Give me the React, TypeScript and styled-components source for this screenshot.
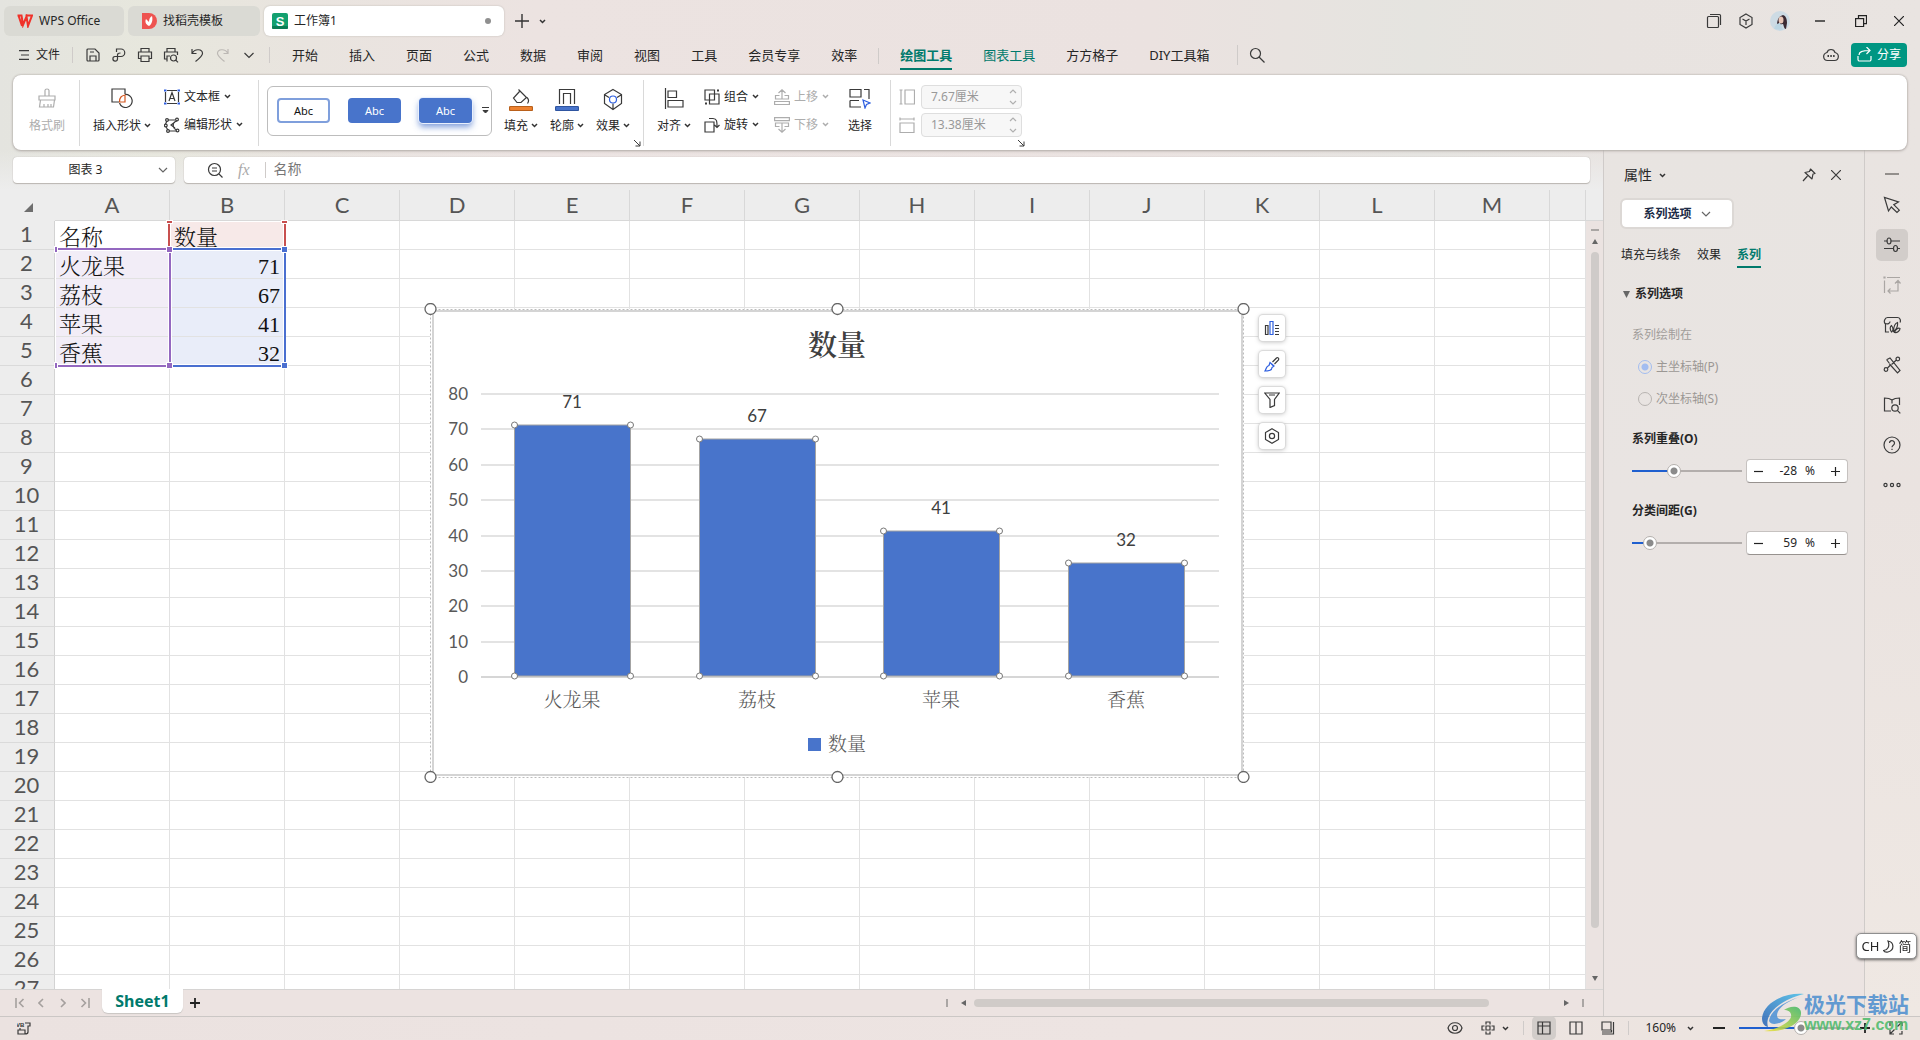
import React, { useState } from "react";
import styled, { createGlobalStyle, css } from "styled-components";

const UI = `"Noto Sans", "Noto Sans CJK SC", sans-serif`;
const SONG = `"Liberation Serif", "Noto Serif CJK SC", "Noto Sans CJK SC", serif`;
const GREEN = "#007a6c";
const BLUE = "#4874cb";
const INK = "#262626";
const FAINT = "#adadad";

const Global = createGlobalStyle`
  *, *::before, *::after { box-sizing: border-box; }
  html, body { margin: 0; padding: 0; }
  body { font: 12px/16px ${UI}; color: ${INK}; overflow: hidden; }
  button, input { font: inherit; color: inherit; margin: 0; padding: 0; border: 0; background: none; }
  button { white-space: nowrap; }
  svg { display: block; flex: none; }
`;

/* ---------- drawing helper ---------- */
type IconProps = { w?: number; h?: number; c?: string; sw?: number; children: React.ReactNode };
const Icon = ({ w = 16, h = w, c = "#3a3a3a", sw = 1.2, children }: IconProps) => (
  <svg width={w} height={h} viewBox={`0 0 ${w} ${h}`} fill="none" stroke={c} strokeWidth={sw} aria-hidden="true">
    {children}
  </svg>
);
const Caret = ({ c = "#333" }: { c?: string }) => (
  <Icon w={7} h={5} c={c} sw={1.5}><path d="M1 1l2.5 2.5L6 1" /></Icon>
);
const Chevron = ({ c = "#666" }: { c?: string }) => (
  <Icon w={10} h={6} c={c}><path d="M1 1l4 4 4-4" /></Icon>
);

/* ---------- frame ---------- */
const Window = styled.div`
  height: 100vh;
  display: flex;
  flex-direction: column;
  background: linear-gradient(90deg, #e4e4df 0%, #e7e7dd 8%, #e9e4df 16%, #ece3e1 28%, #ebe2e0 60%, #e5e4e0 74%, #e8e3e0 84%, #e9e4e1 100%);
`;
const Divider = styled.span<{ $h: number }>`
  flex: none;
  width: 1px;
  height: ${(p) => p.$h}px;
  background: #cfcbc9;
`;
const Grow = styled.span`flex: 1;`;

/* ---------- title bar ---------- */
const TitleBar = styled.header`
  display: flex;
  align-items: center;
  gap: 4px;
  height: 38px;
  padding: 4px 2px 0 4px;
`;
const DocTab = styled.button<{ $w: number; $active?: boolean }>`
  display: flex;
  align-items: center;
  gap: 6px;
  width: ${(p) => p.$w}px;
  height: 30px;
  padding: 0 13px 0 ${(p) => (p.$active ? 8 : 13)}px;
  border-radius: 6px;
  background: ${(p) => (p.$active ? "#fff" : "#dadad4")};
  box-shadow: ${(p) => (p.$active ? "0 0 2px #bbb6b0" : "none")};
`;
const Dot = styled.span`
  width: 6px;
  height: 6px;
  margin-left: auto;
  border-radius: 50%;
  background: #8f8f8f;
`;
const IconButton = styled.button<{ $w: number; $h?: number; $on?: boolean }>`
  display: flex;
  align-items: center;
  justify-content: center;
  flex: none;
  width: ${(p) => p.$w}px;
  height: ${(p) => p.$h ?? 24}px;
  border-radius: 5px;
  background: ${(p) => (p.$on ? "#d2cdca" : "none")};
`;
const Cluster = styled.div<{ $gap?: number; $px?: number }>`
  display: flex;
  align-items: center;
  gap: ${(p) => p.$gap ?? 0}px;
  padding: 0 ${(p) => p.$px ?? 0}px;
`;

/* ---------- menu row ---------- */
const MenuBar = styled.nav`
  display: flex;
  align-items: center;
  height: 37px;
  padding: 0 13px 4px 19px;
`;
const FileButton = styled.button`
  display: flex;
  align-items: center;
  gap: 7px;
  margin-right: 12px;
`;
const MenuList = styled.div`
  display: flex;
  align-items: center;
  gap: 31px;
  padding: 2px 28px 0 22px;
`;
const MenuItem = styled.button<{ $tone?: "active" | "green" }>`
  height: 28px;
  font-size: 13px;
  line-height: 24px;
  border-bottom: 2px solid transparent;
  ${(p) => p.$tone && css`color: ${GREEN};`}
  ${(p) => p.$tone === "active" && css`font-weight: 700; border-color: ${GREEN};`}
`;
const MenuSplit = styled(Divider)`margin: 0 -10px;`;
const Share = styled.button`
  display: flex;
  align-items: center;
  justify-content: center;
  gap: 5px;
  width: 56px;
  height: 24px;
  margin-left: 11px;
  border-radius: 4px;
  background: #009682;
  color: #fff;
`;

/* ---------- ribbon ---------- */
const Ribbon = styled.section`
  display: flex;
  align-items: center;
  flex: none;
  height: 75px;
  margin: 0 13px;
  border-radius: 8px;
  background: #fff;
  box-shadow: 0 0 2px #a8a29e, 0 1px 3px #b9b3b0;
  position: relative;
`;
const Group = styled.div<{ $w: number; $pad?: number; $gap?: number }>`
  position: relative;
  display: flex;
  align-items: center;
  gap: ${(p) => p.$gap ?? 0}px;
  width: ${(p) => p.$w}px;
  height: 66px;
  padding-left: ${(p) => p.$pad ?? 0}px;
  padding-bottom: 4px;
  border-right: 1px solid #d9d9d9;
  &:last-child { border-right: 0; }
`;
const Tool = styled.button<{ $w: number; $off?: boolean }>`
  display: flex;
  flex-direction: column;
  align-items: center;
  justify-content: space-between;
  flex: none;
  width: ${(p) => p.$w}px;
  height: 46px;
  color: ${(p) => (p.$off ? FAINT : INK)};
`;
const Label = styled.span`
  display: flex;
  align-items: center;
  gap: 3px;
`;
const Stack = styled.div<{ $gap?: number; $w?: number }>`
  display: flex;
  flex-direction: column;
  flex: none;
  gap: ${(p) => p.$gap ?? 12}px;
  width: ${(p) => (p.$w ? p.$w + "px" : "auto")};
`;
const RowTool = styled.button<{ $off?: boolean }>`
  display: flex;
  align-items: center;
  gap: 4px;
  height: 16px;
  color: ${(p) => (p.$off ? FAINT : INK)};
`;
const Gallery = styled.div`
  display: flex;
  align-items: center;
  flex: none;
  width: 225px;
  height: 50px;
  gap: 18px;
  padding-left: 9px;
  border: 1px solid #bdbdbd;
  border-radius: 6px;
`;
const Swatch = styled.button<{ $kind: "line" | "fill" | "lift" }>`
  flex: none;
  width: 53px;
  height: 25px;
  border-radius: 4px;
  font-size: 11px;
  background: ${(p) => (p.$kind === "line" ? "#fff" : BLUE)};
  color: ${(p) => (p.$kind === "line" ? "#111" : "#fff")};
  border: ${(p) => (p.$kind === "line" ? "2px solid #7f9fdc" : "0")};
  box-shadow: ${(p) => (p.$kind === "lift" ? "0 0 0 1px #e8effc, 0 4px 6px rgba(72,116,203,.7)" : "none")};
`;
const More = styled.button`margin-left: -8px;`;
const Launcher = styled.button`
  position: absolute;
  right: 2px;
  bottom: -1px;
`;
const Field = styled.label`
  display: flex;
  align-items: center;
  gap: 6px;
`;
const SizeBox = styled.span`
  display: flex;
  align-items: center;
  justify-content: space-between;
  width: 101px;
  height: 24px;
  padding: 0 4px 0 9px;
  border: 1px solid #dedede;
  border-radius: 4px;
  background: #f7f7f7;
  color: #999;
  & input { width: 66px; }
`;

/* ---------- work area ---------- */
const Main = styled.main`
  flex: 1;
  min-height: 0;
  display: flex;
`;
const Workspace = styled.section`
  flex: 1;
  min-width: 0;
  display: flex;
  flex-direction: column;
  border-right: 1px solid #cfcbc9;
`;
const FormulaRow = styled.div`
  display: flex;
  gap: 9px;
  flex: none;
  height: 40px;
  padding: 7px 13px 7px 13px;
  background: linear-gradient(180deg, rgba(237,237,237,0) 0%, #ededed 100%);
`;
const NameBox = styled.label`
  display: flex;
  align-items: center;
  width: 162px;
  padding: 0 7px 0 0;
  border-radius: 4px;
  background: #fff;
  box-shadow: 0 0 1px #a9a49e, 0 1px 1px #bcb8b4;
  & input { flex: 1; width: 100px; text-align: center; font-size: 12px; }
`;
const FormulaBox = styled.label`
  flex: 1;
  display: flex;
  align-items: center;
  gap: 15px;
  padding-left: 23px;
  border-radius: 4px;
  background: #fff;
  box-shadow: 0 0 1px #a9a49e, 0 1px 1px #bcb8b4;
  & input { flex: 1; font-size: 14px; line-height: 20px; padding-bottom: 2px; color: #777; margin-left: -7px; }
`;
const Fx = styled.span`
  font: italic 16px/20px "Liberation Serif", serif;
  color: #aaa;
`;
const SheetArea = styled.div`
  flex: 1;
  min-height: 0;
  display: flex;
  background: #ebe3e1;
  border-bottom: 1px solid #d6d4d3;
`;
const Viewport = styled.div`
  position: relative;
  flex: 1;
  min-width: 0;
  overflow: hidden;
  background: #fff;
`;
const Grid = styled.table`
  width: 100%;
  table-layout: fixed;
  border-collapse: separate;
  border-spacing: 0;
`;
const HeadCol = styled.col`width: 55px;`;
const DataCol = styled.col`width: 115px;`;
const ColHead = styled.th`
  height: 31px;
  padding: 0;
  background: #ededed;
  border-right: 1px solid #d8d8d8;
  border-bottom: 1px solid #d8d8d8;
  font: 400 22px/30px Lato, sans-serif;
  color: #555;
`;
const Corner = styled(ColHead)`
  border-bottom-color: #ededed;
  border-right-color: #ededed;
  & svg { margin: 4px 0 0 24px; }
`;
const RowHead = styled.th`
  height: 29px;
  padding: 0 1px 2px 0;
  background: #ededed;
  border-right: 1px solid #d3d3d3;
  border-bottom: 1px solid #dadada;
  font: 400 22px/26px Lato, sans-serif;
  color: #555;
`;
const Cell = styled.td<{ $tint?: string; $num?: boolean }>`
  height: 29px;
  padding: 6px 4px 0;
  border-right: 1px solid #e2e2e2;
  border-bottom: 1px solid #e2e2e2;
  background: ${(p) => p.$tint ?? "#fff"};
  font: 300 22px/22px ${SONG};
  color: #111;
  text-align: ${(p) => (p.$num ? "right" : "left")};
  white-space: nowrap;
`;

/* Source ranges of the selected series, laid over the cells. */
const Range = styled.div<{ $c: string; $x: number; $y: number; $w: number; $h: number; $sides: string }>`
  position: absolute;
  left: ${(p) => p.$x}px;
  top: ${(p) => p.$y}px;
  width: ${(p) => p.$w}px;
  height: ${(p) => p.$h}px;
  border: solid ${(p) => p.$c};
  border-width: ${(p) => p.$sides};
  box-shadow: inset 0 0 0 1px #fff;
`;
const Grip = styled.i<{ $c: string; $x: number; $y: number; $w?: number; $h?: number }>`
  position: absolute;
  left: ${(p) => p.$x}px;
  top: ${(p) => p.$y}px;
  width: ${(p) => p.$w ?? 5}px;
  height: ${(p) => p.$h ?? 5}px;
  background: ${(p) => p.$c};
  box-shadow: 0 0 0 1px #fff;
`;
const ChartObject = styled.div`
  position: absolute;
  left: 424px;
  top: 113px;
  display: flex;
  align-items: flex-start;
  gap: 9px;
`;
const ChartTools = styled.div`
  display: flex;
  flex-direction: column;
  gap: 10px;
  padding-top: 12px;
`;
const ChartTool = styled.button`
  display: flex;
  align-items: center;
  justify-content: center;
  width: 26px;
  height: 26px;
  border-radius: 4px;
  background: #fff;
  box-shadow: 0 0 1px 1px #d9d9d9, 0 1px 5px rgba(0,0,0,.25);
`;
const VScroll = styled.div`
  display: flex;
  flex-direction: column;
  align-items: center;
  width: 17px;
  padding-bottom: 8px;
  gap: 8px;
`;
const VHead = styled.span`
  align-self: stretch;
  height: 31px;
  background: #ededed;
  border-bottom: 1px solid #d8d8d8;
`;
const VThumb = styled.span`
  flex: 1;
  width: 8px;
  margin-bottom: 40px;
  border-radius: 4px;
  background: #cfcbc9;
`;
const Tick = styled.span<{ $w: number; $h: number }>`
  flex: none;
  width: ${(p) => p.$w}px;
  height: ${(p) => p.$h}px;
  background: #aaa6a4;
`;

/* ---------- sheet tabs ---------- */
const SheetBar = styled.div`
  display: flex;
  align-items: center;
  flex: none;
  height: 26px;
  padding-left: 9px;
  background: #ece3e1;
`;
const SheetTab = styled.button`
  align-self: flex-start;
  width: 81px;
  height: 24px;
  margin: -1px 2px 0 7px;
  border-radius: 0 0 6px 6px;
  background: #fff;
  box-shadow: 0 1px 1px #c9c5c3;
  color: ${GREEN};
  font-size: 16px;
  line-height: 22px;
  font-weight: 700;
  position: relative;
`;
const HScroll = styled.div`
  display: flex;
  align-items: center;
  width: 40%;
  max-width: 638px;
  margin-right: 19px;
  gap: 13px;
`;
const HThumb = styled.span`
  flex: 1;
  height: 8px;
  margin: 0 62px 0 -5px;
  border-radius: 4px;
  background: #d0cbc8;
`;

/* ---------- properties panel ---------- */
const Panel = styled.aside`
  flex: none;
  width: 261px;
  padding: 17px 16px 0 16px;
  border-right: 1px solid #cfcbc9;
  background: linear-gradient(180deg, #e8e4e1, #e9e4e2 40%, #ece4e2);
`;
const PanelHead = styled.div`
  display: flex;
  align-items: center;
  height: 16px;
  padding: 0 0 0 4px;
  & > h2 { margin: 0 7px 0 0; font: 400 14px/16px ${UI}; }
`;
const PickButton = styled.button`
  display: flex;
  align-items: center;
  justify-content: center;
  gap: 9px;
  width: 114px;
  height: 31px;
  margin-top: 15px;
  border: 2px solid #dcd8d5;
  border-radius: 6px;
  background: #fff;
  background-clip: padding-box;
  font-weight: 700;
  color: #1c2b46;
`;
const PanelTabs = styled.div`
  display: flex;
  gap: 16px;
  margin: 18px 0 0 1px;
`;
const PanelTab = styled.button<{ $on?: boolean }>`
  height: 21px;
  padding-bottom: 3px;
  border-bottom: 2px solid ${(p) => (p.$on ? GREEN : "transparent")};
  color: ${(p) => (p.$on ? GREEN : INK)};
  font-weight: ${(p) => (p.$on ? 700 : 400)};
`;
const SectionTitle = styled.h3`
  display: flex;
  align-items: center;
  gap: 5px;
  margin: 18px 0 0 3px;
  font: 700 12px/16px ${UI};
`;
const Block = styled.div`padding-left: 12px;`;
const Muted = styled.p`
  margin: 25px 0 0;
  color: #a19d9a;
`;
const Radio = styled.label`
  display: flex;
  align-items: center;
  gap: 4px;
  margin: 16px 0 0 6px;
  color: #9b9794;
  & input {
    appearance: none;
    width: 14px;
    height: 14px;
    border: 1px solid #b8b4b1;
    border-radius: 50%;
  }
  & input:checked {
    border-color: #a3bdf0;
    background: radial-gradient(circle, #a3bdf0 3px, transparent 4px);
  }
`;
const FieldTitle = styled.label<{ $top: number }>`
  display: block;
  margin-top: ${(p) => p.$top}px;
  font-weight: 700;
`;
const SliderRow = styled.div`
  display: flex;
  align-items: center;
  gap: 4px;
  margin-top: 12px;
`;
const Slider = styled.input.attrs({ type: "range" })<{ $fill: number; $w: number }>`
  appearance: none;
  flex: none;
  width: ${(p) => p.$w}px;
  height: 16px;
  background: linear-gradient(90deg, #1f5fcf ${(p) => p.$fill}%, #b3aeac ${(p) => p.$fill}%) center / 100% 2px no-repeat;
  &::-webkit-slider-thumb {
    appearance: none;
    width: 14px;
    height: 14px;
    border: 1px solid #b5b1ae;
    border-radius: 50%;
    background: radial-gradient(circle, #8b8b8b 3px, #fff 4px);
  }
`;
const Spin = styled.div`
  display: flex;
  align-items: center;
  width: 102px;
  height: 24px;
  padding: 0 7px;
  border: 1px solid #c6c2c0;
  border-bottom-color: #97928f;
  border-radius: 4px;
  background: #fff;
  & input { width: 32px; text-align: right; margin-left: 2px; margin-right: 8px; }
`;

/* ---------- right strip ---------- */
const Strip = styled.nav`
  flex: none;
  width: 55px;
  display: flex;
  flex-direction: column;
  align-items: center;
  gap: 8px;
  padding: 23px 1px 0 0;
  background: linear-gradient(180deg, #e9e4e1, #eae3e0 40%, #efe8e3);
`;
const StripLine = styled.span`
  width: 14px;
  height: 2px;
  margin-bottom: 6px;
  background: #938f8c;
`;

/* ---------- status bar ---------- */
const StatusBar = styled.footer`
  position: relative;
  display: flex;
  align-items: center;
  flex: none;
  height: 24px;
  padding: 0 3px 1px 17px;
  border-top: 1px solid #cbc7c5;
  background: linear-gradient(90deg, #ebe2e0, #ede4e2 60%, #ece4df);
`;
const ViewButtons = styled(Cluster)`
  margin-left: 14px;
  & > span:first-child { margin-right: 8px; }
  & > span:last-child { margin-left: 8px; }
`;
const Zoom = styled.button`
  display: flex;
  align-items: center;
  gap: 11px;
  margin: 0 18px 0 16px;
`;
const ZoomRange = styled.div`
  display: flex;
  align-items: center;
  gap: 13px;
`;
const Mark = styled.div`
  position: absolute;
  right: 11px;
  bottom: 6px;
  display: flex;
  align-items: center;
  opacity: .88;
  pointer-events: none;
`;
const MarkText = styled.div`
  margin-left: -2px;
  & b { display: block; font: 700 21px/24px "Noto Sans CJK SC", sans-serif; color: #4f90cf; }
  & span { display: block; font: 700 16px/19px "Liberation Sans", sans-serif; color: #4fba6c; }
`;
const Ime = styled.div`
  position: fixed;
  right: 3px;
  bottom: 81px;
  display: flex;
  align-items: center;
  justify-content: center;
  gap: 4px;
  width: 61px;
  height: 26px;
  border: 1px solid #8f8f8f;
  border-radius: 5px;
  background: #fff;
  box-shadow: 0 1px 3px rgba(0,0,0,.6);
  font-size: 13px;
`;

/* ---------- data ---------- */
const columns = "ABCDEFGHIJKLM".split("");
const items = [
  { name: "火龙果", value: 71 },
  { name: "荔枝", value: 67 },
  { name: "苹果", value: 41 },
  { name: "香蕉", value: 32 },
];
const ROSE = "#f7e9e8";
const LILAC = "#f2edf7";
const SKY = "#e9edf9";
const PURPLE = "#9468c0";
const RED = "#c8504f";
const ROYAL = "#4a6fd0";

const Chart = () => {
  const left = 57, right = 795, base = 373, unit = 283 / 80, step = (right - left) / items.length, bw = 116;
  const handles = [6, 413, 819].flatMap((x) => [6, 474].map((y) => [x, y]));
  return (
    <svg width="826" height="480" viewBox="0 0 826 480" role="img" aria-label="数量">
      <rect x="6" y="6" width="814" height="468" fill="#fff" />
      <rect x="9" y="8" width="809" height="464" fill="#fff" stroke="#d4d4d4" strokeWidth="2" />
      <rect x="6.5" y="6.5" width="813" height="468" fill="none" stroke="#bcbcbc" strokeDasharray="2 2" />
      <text x="413" y="53" textAnchor="middle" fontFamily={SONG} fontSize="29" fontWeight="600" fill="#404040">数量</text>
      {[0, 10, 20, 30, 40, 50, 60, 70, 80].map((v) => {
        const y = Math.round(base - v * unit);
        return (
          <g key={v}>
            <path d={`M${left} ${y + 1}H${right}`} stroke={v ? "#e3e3e3" : "#d6d6d6"} strokeWidth="2" />
            <text x="44" y={y + 7} textAnchor="end" fontFamily="Lato, sans-serif" fontSize="17" fill="#595959">{v}</text>
          </g>
        );
      })}
      {items.map((it, i) => {
        const cx = Math.round(left + step * (i + 0.5) - 1);
        const x = cx - bw / 2;
        const y = Math.round(base - it.value * unit);
        return (
          <g key={it.name}>
            <rect x={x + 0.5} y={y} width={bw} height={base - y} fill={BLUE} stroke="#a3a3a3" />
            {[[x, y], [x + bw, y], [x, base], [x + bw, base]].map(([a, b]) => (
              <circle key={a + "-" + b} cx={a + 0.5} cy={b} r="3" fill="#fff" stroke="#777" />
            ))}
            <text x={cx} y={y - 17} textAnchor="middle" fontFamily="Lato, sans-serif" fontSize="17" fill="#404040">{it.value}</text>
            <text x={cx} y="404" textAnchor="middle" fontFamily={SONG} fontSize="19" fontWeight="300" fill="#595959">{it.name}</text>
          </g>
        );
      })}
      <rect x="384" y="435" width="13" height="13" fill={BLUE} />
      <text x="404" y="448" fontFamily={SONG} fontSize="19" fontWeight="300" fill="#595959">数量</text>
      {handles.map(([x, y]) => (
        <circle key={x + "-" + y} cx={x + 0.5} cy={y} r="5.5" fill="#fff" stroke="#666" strokeWidth="1.3" />
      ))}
    </svg>
  );
};

const NumberRow = ({ id, value, set, min, max }: { id: string; value: number; set: (n: number) => void; min: number; max: number }) => (
  <SliderRow>
    <Slider id={id} $w={110} $fill={((value - min) / (max - min)) * 100} min={min} max={max} value={value} onChange={(e) => set(+e.target.value)} />
    <Spin>
      <button aria-label="减少" onClick={() => set(Math.max(min, value - 1))}><Icon w={9} c="#222"><path d="M0 4.5h9" /></Icon></button>
      <input aria-label="数值" value={value} onChange={(e) => set(+e.target.value || 0)} />
      <span>%</span>
      <Grow />
      <button aria-label="增加" onClick={() => set(Math.min(max, value + 1))}><Icon w={9} c="#222"><path d="M0 4.5h9M4.5 0v9" /></Icon></button>
    </Spin>
  </SliderRow>
);

const quick = [
  { n: "保存", d: <path d="M2 3a1 1 0 0 1 1-1h7l4 4v7a1 1 0 0 1-1 1H3a1 1 0 0 1-1-1zM5 14V9h6v5M5 5h4" /> },
  { n: "输出", d: <path d="M5.500 5V2h4.500a3.500 3.500 0 0 1 0 7.500H4a2.300 2.300 0 1 0 2.500 2.500V8c0-1.500 1-2 3-2" /> },
  { n: "打印", d: <path d="M4 5V1.500h8V5M4 11.500H1.500V5h13v6.500H12M4 9h8v5.500H4z" /> },
  { n: "打印预览", d: <><path d="M4 5V1.500h8V5M4 12H1.500V5h13v3M4 14.500V9h3" /><circle cx="10.500" cy="11" r="3" /><path d="M12.800 13.200l2.200 2.200" /></> },
  { n: "撤销", d: <path d="M3 2v4.500h4.500M3 6.500C6 1 13.500 2 13.500 6.500 13.500 9 11 11 6.500 14.500" /> },
  { n: "重做", off: true, d: <path d="M13 2v4.500H8.500M13 6.500C10 1 2.500 2 2.500 6.500 2.500 9 5 11 9.500 14.500" /> },
  { n: "更多", d: <path d="M3.500 6l4.500 4.500L12.500 6" /> },
];

const rail = [
  { n: "选择", d: <path d="M1.500 1.500l4 13.500 2.800-4 5.700 5.500 2.300-2.300-5.500-5.500L15.500 6z" /> },
  { n: "属性", on: true, d: <><path d="M1 5h3.500M8 5h9M1 12.500h9M14 12.500h3" /><ellipse cx="6" cy="5" rx="2" ry="3" /><ellipse cx="12.500" cy="12.500" rx="2" ry="3" /></> },
  { n: "自定义", off: true, d: <path d="M1.500 4.500V17M4 1.500h13M1 1h1v1H1zM15 5v10H5M12 7.500L15 4.500l2.500 3M7.500 12.500L5 15l2.500 2.500" /> },
  { n: "样式", d: <path d="M6 16H2.500V8C0 6 2 1.500 4.500 1.500h10c2.500 0 3.500 3 2.500 5M2.500 7.500c2 1 4.500 0 4.500-2M8.500 16c-2-3-1.500-5.500 0-6.500 1.500 2 2 5 0 6.500zM10.500 15.500c0-5 1.500-8 4-9 .5 4-1 7-4 9zM11.500 16.500c1-3 3.500-5 5.500-4 0 2-2.500 4.500-5.500 4z" /> },
  { n: "工具", d: <><path d="M4 3.500L7 2l10 12.500-2.500 2.500L6.500 8M8.500 8.500l2.500-2" /><circle cx="14.800" cy="3" r="1.800" /><circle cx="3" cy="13.500" r="1.800" /><path d="M10.500 6.500l3-2.500M4.500 12l3-3M3.500 3.500l3 4" /></> },
  { n: "查找", d: <><path d="M9 4v3.500M9 4C7 2.500 4 2 1.500 2V15H8M9 4c2-1.500 5-2 7.500-2v7" /><circle cx="12" cy="12" r="3.200" /><path d="M14.300 14.300l3 3" /></> },
  { n: "帮助", d: <><circle cx="9" cy="9" r="8" /><path d="M6.500 7a2.500 2.500 0 1 1 3.800 2.200C9.400 9.800 9 10.200 9 11.200M9 12.800v1.200" /></> },
  { n: "更多", d: <><circle cx="2.500" cy="9" r="1.600" /><circle cx="9" cy="9" r="1.600" /><circle cx="15.500" cy="9" r="1.600" /></> },
];

export default function App() {
  const [overlap, setOverlap] = useState(-28);
  const [gap, setGap] = useState(59);
  const [zoom, setZoom] = useState(160);

  return (
    <Window>
      <Global />
      <TitleBar>
        <DocTab $w={120}>
          <svg width="16" height="14" viewBox="0 0 16 14" fill="none" stroke="#f0322a" strokeWidth="2"><path d="M.5 1.500h4L6 11l3.500-8.500L11 12l4-10.500H8.500M1.500 1.500L5 12" /></svg>
          WPS Office
        </DocTab>
        <DocTab $w={132}>
          <svg width="16" height="16" viewBox="0 0 16 16"><path d="M1 0h7a8 8 0 0 1 0 16H1z" fill="#ee5350" /><path d="M8 13C4 11 4 8 5 6l3 3c0-3 1-5 3-6 1 4 0 8-3 10z" fill="#fff" /></svg>
          找稻壳模板
        </DocTab>
        <DocTab $w={240} $active>
          <svg width="16" height="16" viewBox="0 0 16 16"><rect width="16" height="16" rx="2" fill="#13a06f" /><rect y="13" width="16" height="3" rx="1" fill="#0b7d55" /><text x="8" y="12.500" textAnchor="middle" fontSize="13" fontWeight="700" fontFamily="Liberation Sans, sans-serif" fill="#fff">S</text></svg>
          工作簿1
          <Dot />
        </DocTab>
        <Cluster>
          <IconButton $w={28} aria-label="新建"><Icon w={14} c="#333" sw={1.4}><path d="M0 7h14M7 0v14" /></Icon></IconButton>
          <IconButton $w={12} aria-label="标签列表"><Caret /></IconButton>
        </Cluster>
        <Grow />
        <Cluster>
          <IconButton $w={32} aria-label="窗口"><Icon><rect x="1.500" y="3.500" width="11" height="11" rx="1" /><path d="M4 1.500h9.500a1 1 0 0 1 1 1V12" /></Icon></IconButton>
          <IconButton $w={32} aria-label="应用"><Icon><path d="M8 1l6 3.500v7L8 15l-6-3.500v-7zM4.500 6L8 8l3.500-2M8 8v4" /></Icon></IconButton>
          <IconButton $w={36} aria-label="账户">
            <svg width="20" height="20" viewBox="0 0 20 20"><circle cx="10" cy="10" r="10" fill="#cddbe4" /><path d="M7 14c0-5 2-9 6-10 3 1 4 4 4 8l-1 6c-2 0-2-3-3-5z" fill="#3a2a33" /><ellipse cx="11" cy="9" rx="2.500" ry="3.500" fill="#e9c7b8" /><path d="M4 18c1-4 3-6 6-6l3 7z" fill="#bcd6e3" /></svg>
          </IconButton>
          <IconButton $w={44} aria-label="最小化"><Icon w={10} c="#222" sw={1.4}><path d="M0 5h10" /></Icon></IconButton>
          <IconButton $w={38} aria-label="还原"><Icon w={12} c="#222"><rect x=".6" y="3.600" width="8" height="8" /><path d="M3.500 3.500V.6h8v8H9" /></Icon></IconButton>
          <IconButton $w={38} aria-label="关闭"><Icon w={10} c="#222"><path d="M0 0l10 10M10 0L0 10" /></Icon></IconButton>
        </Cluster>
      </TitleBar>

      <MenuBar>
        <FileButton>
          <Icon w={10}><path d="M0 .6h10M2 5h8M0 9.400h10" /></Icon>文件
        </FileButton>
        <Divider $h={16} />
        <Cluster $px={7}>
          {quick.map((q) => (
            <IconButton key={q.n} $w={26} aria-label={q.n}><Icon c={q.off ? "#bcb8b4" : "#3a3a3a"}>{q.d}</Icon></IconButton>
          ))}
        </Cluster>
        <Divider $h={16} />
        <MenuList>
          {["开始", "插入", "页面", "公式", "数据", "审阅", "视图", "工具", "会员专享", "效率"].map((m) => <MenuItem key={m}>{m}</MenuItem>)}
          <MenuSplit $h={16} />
          <MenuItem $tone="active">绘图工具</MenuItem>
          <MenuItem $tone="green">图表工具</MenuItem>
          <MenuItem>方方格子</MenuItem>
          <MenuItem>DIY工具箱</MenuItem>
        </MenuList>
        <Divider $h={20} />
        <IconButton $w={38} aria-label="搜索"><Icon><circle cx="6.500" cy="6.500" r="5" /><path d="M10 10l5.500 5.500" /></Icon></IconButton>
        <Grow />
        <IconButton $w={18} aria-label="云"><Icon><path d="M4 5.500C5 1.500 11 1.500 12 5.500c5 1.500 4 8-.5 8h-7c-4.500 0-5.500-6.500-.5-8z" /><path d="M4.500 9h1.500M7.300 9h1.500M10.100 9h1.500" strokeWidth="1.800" /></Icon></IconButton>
        <Share>
          <Icon w={15} c="#fff"><path d="M2 8c0-3 3-4.500 10.500-4.500M9.500 0L13 3.500 9.500 7M1 9v3.500a1.500 1.500 0 0 0 1.500 1.500h10a1.500 1.500 0 0 0 1.500-1.500V9" /></Icon>分享
        </Share>
      </MenuBar>

      <Ribbon>
        <Group $w={67} $pad={10}>
          <Tool $w={48} $off>
            <Icon w={20} h={20} c={FAINT}><path d="M8 8V2.500c0-2 4-2 4 0V8M2 8h16v4H2zM3.500 12L2.500 19h14l1-7M7 19v-3M11 19v-3M14 16v3" /></Icon>
            <Label>格式刷</Label>
          </Tool>
        </Group>
        <Group $w={179} $pad={12} $gap={12}>
          <Tool $w={60}>
            <Icon w={22} h={20}><path d="M8 14H1V1h13v5" /><path d="M14 6.500A6.500 6.500 0 1 1 8.500 15" /><path d="M8.500 14C8.500 9 10.500 8 14 7v7z" stroke="#d4561e" /></Icon>
            <Label>插入形状<Caret /></Label>
          </Tool>
          <Stack>
            <RowTool>
              <Icon><path d="M1.500 3v10M14.500 3v10M3 1.500h10M3 14.500h10M5 12l3-8.500L11 12M6 9.500h4" /><path d="M0 1.500h2.500M13.500 1.500H16M0 14.500h2.500M13.500 14.500H16" stroke="#2e5fe0" strokeWidth="2" /></Icon>
              文本框<Caret />
            </RowTool>
            <RowTool>
              <Icon><path d="M4 3h7M3 4L1.500 7M2 10l2 3M5 14h7M13 4c-5 1-5 7 0 9M11 5L7 8l4 3" /><circle cx="3" cy="3" r="1.400" /><circle cx="13" cy="2.500" r="1.400" /><circle cx="1.800" cy="8.500" r="1.400" /><circle cx="4" cy="14" r="1.400" /><circle cx="13.500" cy="13.500" r="1.400" /></Icon>
              编辑形状<Caret />
            </RowTool>
          </Stack>
        </Group>
        <Group $w={385} $pad={8} $gap={12}>
          <Gallery>
            <Swatch $kind="line">Abc</Swatch>
            <Swatch $kind="fill">Abc</Swatch>
            <Swatch $kind="lift">Abc</Swatch>
            <More aria-label="更多样式"><Icon w={7} h={7} sw={1}><path d="M0 .5h7M1 3.500h5L3.500 6z" fill="#3a3a3a" /></Icon></More>
          </Gallery>
          <Cluster $gap={12}>
            <Tool $w={34}>
              <Icon w={24} h={23}><path d="M9.500 1.500l8 8-5.500 5H8L4.500 10l6-6.500M18 9.500c2 2 2 4 .5 6" /><rect x=".5" y="18.500" width="23" height="4" rx="1" fill="#ee822f" stroke="#b9601b" /></Icon>
              <Label>填充<Caret /></Label>
            </Tool>
            <Tool $w={34}>
              <Icon w={24} h={23}><path d="M4.500 16V1.500h15V16M8.500 16V5.500h7V16" /><rect x=".5" y="18.500" width="23" height="4" rx="1" fill={BLUE} stroke="#2f55a0" /></Icon>
              <Label>轮廓<Caret /></Label>
            </Tool>
            <Tool $w={34}>
              <Icon w={22} h={23}><path d="M11 1.500l8.500 5v9L11 21.500l-8.500-6v-9zM3 7l4 2.500M19 7l-4 2.500M11 15.500v6" /><circle cx="11" cy="11.500" r="3.500" stroke="#2e5fe0" /></Icon>
              <Label>效果<Caret /></Label>
            </Tool>
          </Cluster>
          <Launcher aria-label="形状设置"><Icon w={7} sw={1}><path d="M0 0l6 6M1.500 6H6V1.500" /></Icon></Launcher>
        </Group>
        <Group $w={247} $pad={12} $gap={12}>
          <Tool $w={36}>
            <Icon w={20} h={21}><path d="M1.500 0v21M4 3h8.500v6.500H4zM4 12.500h15v6.500H4z" /></Icon>
            <Label>对齐<Caret /></Label>
          </Tool>
          <Stack $w={58}>
            <RowTool><Icon><path d="M1 1h9.500v10H1zM5.500 5H15v10H5.500z" /><path d="M13 1.500h2M1 14.500h2" strokeWidth="2" /></Icon>组合<Caret /></RowTool>
            <RowTool><Icon><path d="M1 5h9v10H1zM5 1.500h4c4 0 4 3 4 8M10.500 8l2.500 2.500L15.500 8" /></Icon>旋转<Caret /></RowTool>
          </Stack>
          <Stack $w={56}>
            <RowTool $off><Icon c={FAINT}><path d="M8 10V1M4.500 4L8 .8 11.500 4M5.500 6.500h-4v3.500h13V6.500h-4M.6 12.500h14.800v3H.6z" /></Icon>上移<Caret c={FAINT} /></RowTool>
            <RowTool $off><Icon c={FAINT}><path d="M8 6v9M4.500 12L8 15.200 11.500 12M5.500 9.500h-4V6h13v3.500h-4M.6.6h14.800v3H.6z" /></Icon>下移<Caret c={FAINT} /></RowTool>
          </Stack>
          <Tool $w={36}>
            <Icon w={22} h={21}><path d="M1 9V1.500h11V9zM15 1.500h5V11M1 12.500V19h11M1 12.500h9" /><path d="M14 12l7 3-3.500 1.500L16 20z" stroke="#2e5fe0" /></Icon>
            <Label>选择</Label>
          </Tool>
        </Group>
        <Group $w={136} $pad={8}>
          <Stack $gap={4}>
            <Field>
              <Icon c={FAINT}><path d="M2 1v14M.5 1h3M.5 15h3M6 1h9.500v14H6z" /></Icon>
              <SizeBox><input aria-label="高度" defaultValue="7.67厘米" disabled /><Icon w={8} h={16} c="#b0b0b0"><path d="M1 4l3-3 3 3M1 12l3 3 3-3" /></Icon></SizeBox>
            </Field>
            <Field>
              <Icon c={FAINT}><path d="M1 2h14M1 .5v3M15 .5v3M1 6h14v9.500H1z" /></Icon>
              <SizeBox><input aria-label="宽度" defaultValue="13.38厘米" disabled /><Icon w={8} h={16} c="#b0b0b0"><path d="M1 4l3-3 3 3M1 12l3 3 3-3" /></Icon></SizeBox>
            </Field>
          </Stack>
          <Launcher aria-label="大小设置"><Icon w={7} sw={1}><path d="M0 0l6 6M1.500 6H6V1.500" /></Icon></Launcher>
        </Group>
      </Ribbon>

      <Main>
        <Workspace>
          <FormulaRow>
            <NameBox><input aria-label="名称框" defaultValue="图表 3" /><Chevron /></NameBox>
            <FormulaBox>
              <Icon><circle cx="7.500" cy="7.500" r="6" /><path d="M5 6h5M5 9h5M12 12l3.500 3.500" /></Icon>
              <Fx>fx</Fx>
              <Divider $h={16} />
              <input aria-label="编辑栏" defaultValue="名称" />
            </FormulaBox>
          </FormulaRow>

          <SheetArea>
            <Viewport>
              <Grid>
                <colgroup>
                  <HeadCol />
                  {columns.map((c) => <DataCol key={c} />)}
                  <col />
                </colgroup>
                <thead>
                  <tr>
                    <Corner aria-label="全选"><svg width="9" height="9" viewBox="0 0 9 9"><path d="M9 0v9H0z" fill="#6e6e6e" /></svg></Corner>
                    {columns.map((c) => <ColHead key={c}>{c}</ColHead>)}
                    <ColHead />
                  </tr>
                </thead>
                <tbody>
                  {Array.from({ length: 27 }, (_, i) => {
                    const it = i > 0 ? items[i - 1] : undefined;
                    return (
                      <tr key={i}>
                        <RowHead>{i + 1}</RowHead>
                        <Cell $tint={it ? LILAC : undefined}>{i === 0 ? "名称" : it?.name}</Cell>
                        <Cell $tint={i === 0 ? ROSE : it ? SKY : undefined} $num={!!it}>{i === 0 ? "数量" : it?.value}</Cell>
                        {columns.slice(2).map((c) => <Cell key={c} />)}
                        <Cell />
                      </tr>
                    );
                  })}
                </tbody>
              </Grid>

              <Range $c={RED} $x={168} $y={31} $w={118} $h={27} $sides="0 2px 0 2px" />
              <Range $c={ROYAL} $x={169} $y={58} $w={117} $h={119} $sides="2px" />
              <Range $c={PURPLE} $x={55} $y={58} $w={116} $h={119} $sides="2px 2px 2px 0" />
              <Grip $c={RED} $x={167} $y={31} $h={2} />
              <Grip $c={RED} $x={282} $y={31} $h={2} />
              <Grip $c={PURPLE} $x={55} $y={57} $w={2} />
              <Grip $c={PURPLE} $x={55} $y={173} $w={2} />
              <Grip $c={PURPLE} $x={167} $y={57} />
              <Grip $c={PURPLE} $x={167} $y={173} />
              <Grip $c={ROYAL} $x={282} $y={57} />
              <Grip $c={ROYAL} $x={282} $y={173} />

              <ChartObject>
                <Chart />
                <ChartTools>
                  <ChartTool aria-label="图表元素"><Icon><path d="M1.500 5.500h2.500v9H1.500zM11 5.500h4M11 8.500h4M11 11.500h4M11 14.500h4" /><path d="M6 1.500h3v13H6z" stroke="#2e5fe0" /></Icon></ChartTool>
                  <ChartTool aria-label="图表样式"><Icon><path d="M8.500 6l4-4c1-1 3 0 2 2l-4 4" /><path d="M6 6.500l4 3.500-2 1.500c0 3-3 3.500-7 3.500 1-1 1-5 4-5.500zM7 7.500L9.500 10" stroke="#2e5fe0" /></Icon></ChartTool>
                  <ChartTool aria-label="图表筛选"><Icon><path d="M.8 1h14.400L10.500 7.500v6L6 15.500v-8zM5 3h6" /></Icon></ChartTool>
                  <ChartTool aria-label="设置"><Icon><path d="M8 .7l6.500 3.800v7L8 15.300l-6.500-3.800v-7z" /><circle cx="8" cy="8" r="2.600" /></Icon></ChartTool>
                </ChartTools>
              </ChartObject>
            </Viewport>
            <VScroll>
              <VHead />
              <Tick $w={8} $h={2} />
              <Icon w={6} h={5}><path d="M0 5l3-5 3 5z" fill="#666" stroke="none" /></Icon>
              <VThumb />
              <Icon w={6} h={5}><path d="M0 0l3 5 3-5z" fill="#666" stroke="none" /></Icon>
            </VScroll>
          </SheetArea>

          <SheetBar>
            <IconButton $w={22} aria-label="第一个"><Icon w={10} h={10} c="#a5a09e" sw={1.6}><path d="M1 0v10M8.500 1l-4 4 4 4" /></Icon></IconButton>
            <IconButton $w={20} aria-label="上一个"><Icon w={6} h={10} c="#a5a09e" sw={1.6}><path d="M5 1L1 5l4 4" /></Icon></IconButton>
            <IconButton $w={24} aria-label="下一个"><Icon w={6} h={10} c="#a5a09e" sw={1.6}><path d="M1 1l4 4-4 4" /></Icon></IconButton>
            <IconButton $w={20} aria-label="最后一个"><Icon w={10} h={10} c="#a5a09e" sw={1.6}><path d="M9 0v10M1.500 1l4 4-4 4" /></Icon></IconButton>
            <SheetTab>Sheet1</SheetTab>
            <IconButton $w={20} aria-label="新建工作表"><Icon w={10} c="#222" sw={1.8}><path d="M0 5h10M5 0v10" /></Icon></IconButton>
            <Grow />
            <HScroll>
              <Tick $w={2} $h={8} />
              <Icon w={5} h={6}><path d="M5 0L0 3l5 3z" fill="#666" stroke="none" /></Icon>
              <HThumb />
              <Icon w={5} h={6}><path d="M0 0l5 3-5 3z" fill="#666" stroke="none" /></Icon>
              <Tick $w={2} $h={8} />
            </HScroll>
          </SheetBar>
        </Workspace>

        <Panel>
          <PanelHead>
            <h2>属性</h2><Caret />
            <Grow />
            <Cluster $gap={3}>
              <IconButton $w={24} aria-label="固定"><Icon w={14}><path d="M8.500 1l4.500 4.500-2 .5-1 5L3 4.500l4.500-1zM5.500 8L1 13" strokeLinejoin="round" /></Icon></IconButton>
              <IconButton $w={24} aria-label="关闭面板"><Icon w={10}><path d="M0 0l10 10M10 0L0 10" /></Icon></IconButton>
            </Cluster>
          </PanelHead>
          <PickButton>系列选项<Chevron /></PickButton>
          <PanelTabs>
            <PanelTab>填充与线条</PanelTab>
            <PanelTab>效果</PanelTab>
            <PanelTab $on>系列</PanelTab>
          </PanelTabs>
          <SectionTitle><Icon w={7} h={7}><path d="M0 0h7L3.500 7z" fill="#666" stroke="none" /></Icon>系列选项</SectionTitle>
          <Block>
            <Muted>系列绘制在</Muted>
            <Radio><input type="radio" name="axis" defaultChecked disabled />主坐标轴(P)</Radio>
            <Radio><input type="radio" name="axis" disabled />次坐标轴(S)</Radio>
            <FieldTitle $top={24} htmlFor="overlap">系列重叠(O)</FieldTitle>
            <NumberRow id="overlap" value={overlap} set={setOverlap} min={-100} max={100} />
            <FieldTitle $top={20} htmlFor="gap">分类间距(G)</FieldTitle>
            <NumberRow id="gap" value={gap} set={setGap} min={0} max={500} />
          </Block>
        </Panel>

        <Strip>
          <StripLine />
          {rail.map((r) => (
            <IconButton key={r.n} $w={32} $h={32} $on={r.on} aria-label={r.n}><Icon w={18} c={r.off ? "#aaa6a3" : "#3a3a3a"}>{r.d}</Icon></IconButton>
          ))}
        </Strip>
      </Main>

      <StatusBar>
        <Icon w={14} h={13}><text x="-1" y="5" fontSize="6" fontWeight="700" stroke="none" fill="#333" fontFamily="Liberation Sans, sans-serif">VB</text><path d="M8 1h5v3h-2v6c0 2-1 2-3 2H1V8h7v4M3 8V6" /></Icon>
        <Grow />
        <Cluster>
          <IconButton $w={40} $h={22} aria-label="护眼模式"><Icon><path d="M1 8c2-7 12-7 14 0-2 7-12 7-14 0z" /><circle cx="8" cy="8" r="2.500" /></Icon></IconButton>
          <IconButton $w={26} $h={22} aria-label="阅读模式"><Icon w={14}><path d="M5 5h4v4H5zM5 3.500V1h4v2.500M5 10.500V13h4v-2.500M3.500 5H1v4h2.500M10.500 5H13v4h-2.500" /></Icon></IconButton>
          <IconButton $w={8} $h={22} aria-label="阅读模式选项"><Caret /></IconButton>
        </Cluster>
        <ViewButtons>
          <Divider $h={14} />
          <IconButton $w={24} $on aria-label="普通视图"><Icon w={14}><path d="M1 1h12v12H1zM1 5h12M5.500 1v12" /></Icon></IconButton>
          <IconButton $w={40} aria-label="分页预览"><Icon w={14}><path d="M1 1h12v12H1zM7 1v12" /></Icon></IconButton>
          <IconButton $w={24} aria-label="页面布局"><Icon w={14}><path d="M1 1h9v8H1zM12.500 1v12H1M1 11h9.500V9" /></Icon></IconButton>
          <Divider $h={14} />
        </ViewButtons>
        <Zoom>{zoom}%<Caret /></Zoom>
        <ZoomRange>
          <IconButton $w={14} aria-label="缩小"><Icon w={12} h={2} c="#222" sw={2}><path d="M0 1h12" /></Icon></IconButton>
          <Slider aria-label="缩放" $w={116} $fill={54} min={20} max={280} value={zoom} onChange={(e) => setZoom(+e.target.value)} />
        </ZoomRange>
        <IconButton $w={20} aria-label="放大"><Icon w={10} c="#222" sw={1.8}><path d="M0 5h10M5 0v10" /></Icon></IconButton>
        <IconButton $w={42} aria-label="全屏"><Icon w={14}><path d="M8.500 5.500L13 1M9 1h4v4M5.500 8.500L1 13M1 9v4h4M1 5V1h3M10 13h3v-3" /></Icon></IconButton>
        <Mark>
          <svg width="46" height="42" viewBox="0 0 46 42">
            <defs>
              <linearGradient id="wave" x1="0" y1="1" x2="1" y2="0"><stop offset="0" stopColor="#2d62b5" /><stop offset="1" stopColor="#4cc0ea" /></linearGradient>
              <linearGradient id="leaf" x1="0" y1="1" x2="1" y2="0"><stop offset="0" stopColor="#f2e13a" /><stop offset="1" stopColor="#41b86a" /></linearGradient>
            </defs>
            <path d="M44 2C26 0 4 10 2 26c0 5 2 8 6 9C4 22 20 8 44 2z" fill="url(#wave)" />
            <path d="M40 5C22 10 10 20 9 29c2 5 12 3 17-2-6 1-9 0-9-4C18 15 28 9 40 5z" fill="#4f93d6" />
            <path d="M24 18c6-5 18-5 17 4C40 33 22 41 4 39c14-2 25-8 27-14 1-5-3-7-7-7z" fill="url(#leaf)" />
          </svg>
          <MarkText><b>极光下载站</b><span>www.xz7.com</span></MarkText>
        </Mark>
      </StatusBar>

      <Ime>CH <Icon w={11} h={13}><path d="M5 1c6 1 7 9 0 11-2 .5-4-.5-4.500-1.500C5 10 7 6 5 1z" /></Icon> 简</Ime>
    </Window>
  );
}
